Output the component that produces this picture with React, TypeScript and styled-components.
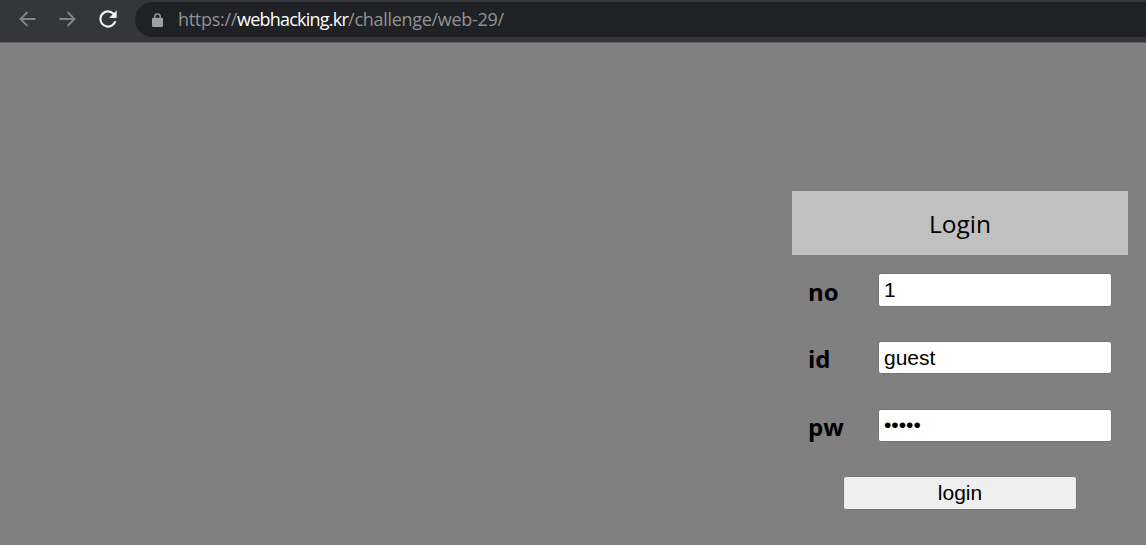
import React, { useState } from "react";
import styled, { createGlobalStyle } from "styled-components";

interface FieldConfig {
  name: string;
  type: string;
  initial: string;
  height: number;
  labelHeight: number;
}

const fields: FieldConfig[] = [
  { name: "no", type: "text", initial: "1", height: 34, labelHeight: 38 },
  { name: "id", type: "text", initial: "guest", height: 33, labelHeight: 36 },
  { name: "pw", type: "password", initial: "guest", height: 33, labelHeight: 36 },
];

const LoginField: React.FC<FieldConfig> = ({
  name,
  type,
  initial,
  height,
  labelHeight,
}) => {
  const [value, setValue] = useState(initial);

  return (
    <FieldRow>
      <FieldLabel htmlFor={name} $height={labelHeight}>
        {name}
      </FieldLabel>
      <FieldInput
        id={name}
        name={name}
        type={type}
        value={value}
        $height={height}
        onChange={(e) => setValue(e.target.value)}
      />
    </FieldRow>
  );
};

const App: React.FC = () => {
  return (
    <>
      <GlobalStyle />
      <Browser>
        <Toolbar>
          <NavButton aria-label="Back">
            <svg width="18" height="18" viewBox="0 0 18 18">
              <path d="M16.5 9h-15M8.5 2l-7 7 7 7" />
            </svg>
          </NavButton>
          <NavButton aria-label="Forward">
            <svg width="18" height="18" viewBox="0 0 18 18">
              <path d="M.5 9h15M8.5 2l7 7-7 7" />
            </svg>
          </NavButton>
          <ReloadButton aria-label="Reload">
            <svg width="26" height="26" viewBox="0 0 24 24">
              <path d="M17.65 6.35A7.96 7.96 0 0 0 12 4a8 8 0 1 0 7.73 10h-2.08A6 6 0 1 1 12 6c1.66 0 3.14.69 4.22 1.78L13 11h7V4z" />
            </svg>
          </ReloadButton>
          <AddressBar>
            <LockIcon width="11" height="14" viewBox="0 0 11 14">
              <path
                d="M2.8 6V3.6a2.7 2.7 0 0 1 5.4 0V6"
                fill="none"
                stroke="#9aa0a6"
                strokeWidth="1.4"
              />
              <rect y="4.8" width="11" height="9.2" rx="1.2" fill="#9aa0a6" />
            </LockIcon>
            <Url>
              https://<Host>webhacking.kr</Host>/challenge/web-29/
            </Url>
          </AddressBar>
        </Toolbar>
        <Page>
          <LoginForm onSubmit={(e) => e.preventDefault()}>
            <FormTitle>Login</FormTitle>
            <Fields>
              {fields.map((field) => (
                <LoginField key={field.name} {...field} />
              ))}
            </Fields>
            <LoginButton type="submit">login</LoginButton>
          </LoginForm>
        </Page>
      </Browser>
    </>
  );
};

export default App;

const GlobalStyle = createGlobalStyle`
  body {
    margin: 0;
    background: #808080;
  }
`;

const Browser = styled.div`
  display: flex;
  flex-direction: column;
  height: 100vh;
  overflow: hidden;
  background: #808080;
`;

const Toolbar = styled.header`
  display: flex;
  align-items: flex-start;
  flex-shrink: 0;
  box-sizing: border-box;
  height: 43px;
  padding: 2px 0 0 8px;
  background: #35363a;
  border-bottom: 1px solid #5b5c5e;
`;

const NavButton = styled.button`
  display: flex;
  align-items: center;
  justify-content: center;
  width: 40px;
  height: 34px;
  padding: 0;
  background: none;
  border: none;

  path {
    fill: none;
    stroke: #828387;
    stroke-width: 1.9;
  }
`;

const ReloadButton = styled(NavButton)`
  width: 39px;

  path {
    fill: #f1f3f4;
    stroke: none;
  }
`;

const AddressBar = styled.div`
  display: flex;
  flex: 1;
  align-items: center;
  box-sizing: border-box;
  height: 35px;
  padding-left: 17px;
  margin-left: 8px;
  background: #202124;
  border-radius: 18px 0 0 18px;
`;

const LockIcon = styled.svg`
  flex-shrink: 0;
  margin-right: 15px;
`;

const Url = styled.span`
  color: #8f9296;
  font-family: "Open Sans", "Noto Sans", sans-serif;
  font-size: 18px;
  line-height: 33px;
  letter-spacing: -0.3px;
  white-space: nowrap;
`;

const Host = styled.span`
  color: white;
  letter-spacing: -0.77px;
`;

const Page = styled.main`
  display: flex;
  flex: 1;
  justify-content: flex-end;
  padding: 148px 18px 0 0;
`;

const LoginForm = styled.form`
  display: flex;
  flex-direction: column;
  align-items: center;
  width: 336px;
`;

const FormTitle = styled.div`
  width: 100%;
  height: 64px;
  background: #c0c0c0;
  color: black;
  font-family: "Open Sans", "Noto Sans", sans-serif;
  font-size: 24.5px;
  line-height: 65px;
  text-align: center;
`;

const Fields = styled.div`
  display: flex;
  flex-direction: column;
  align-self: stretch;
  padding: 18px 16px 0;
`;

const FieldRow = styled.div`
  display: flex;
  align-items: flex-start;
  justify-content: space-between;
  height: 68px;

  &:last-child {
    height: 67px;
  }
`;

const FieldLabel = styled.label<{ $height: number }>`
  color: black;
  font-family: "Open Sans", "Noto Sans", sans-serif;
  font-size: 24px;
  font-weight: 700;
  line-height: ${({ $height }) => $height}px;
`;

const FieldInput = styled.input<{ $height: number }>`
  box-sizing: border-box;
  width: 234px;
  height: ${({ $height }) => $height}px;
  padding: 0 5px;
  background: white;
  border: 1px solid #767676;
  border-radius: 3px;
  color: black;
  font-family: "Liberation Sans", Arial, sans-serif;
  font-size: 21px;
  outline: none;

  &[type="password"] {
    padding-bottom: 2px;
  }
`;

const LoginButton = styled.button`
  box-sizing: border-box;
  width: 234px;
  height: 34px;
  padding: 0;
  background: #efefef;
  border: 1px solid #767676;
  border-radius: 3px;
  color: black;
  font-family: "Liberation Sans", Arial, sans-serif;
  font-size: 21px;
`;
